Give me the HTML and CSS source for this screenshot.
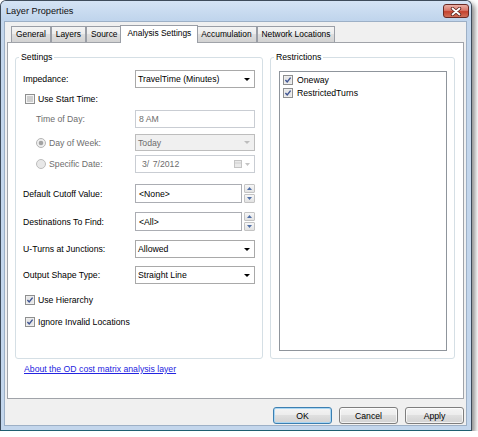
FILE: index.html
```html
<!DOCTYPE html>
<html>
<head>
<meta charset="utf-8">
<title>Layer Properties</title>
<link rel="stylesheet" href="styles.css">
</head>
<body>
<div class="window">
  <div class="titlebar">
    <span class="title">Layer Properties</span>
    <div class="close">
      <svg width="12" height="9" viewBox="0 0 12 9"><path d="M2.5 1.5 L9.5 7.5 M9.5 1.5 L2.5 7.5" stroke="#5b231d" stroke-width="3.4" stroke-linecap="round"/><path d="M2.5 1.5 L9.5 7.5 M9.5 1.5 L2.5 7.5" stroke="#fff" stroke-width="1.8" stroke-linecap="round"/></svg>
    </div>
  </div>
  <div class="client">
    <div class="tabs">
      <div class="tab">General</div>
      <div class="tab">Layers</div>
      <div class="tab">Source</div>
      <div class="tab active">Analysis Settings</div>
      <div class="tab">Accumulation</div>
      <div class="tab">Network Locations</div>
    </div>
    <div class="panel">
      <div class="groups">
        <fieldset class="group settings">
          <legend>Settings</legend>
          <div class="row">
            <span class="lbl">Impedance:</span>
            <div class="ctl combo"><span>TravelTime (Minutes)</span><svg class="arrow" width="6" height="3" viewBox="0 0 6 3"><path d="M0 0 H6 L3 3 Z" fill="#000"/></svg></div>
          </div>
          <div class="row h16 mt3">
            <label class="check">
              <svg width="10" height="10" viewBox="0 0 10 10"><rect x=".5" y=".5" width="9" height="9" fill="#f4f4f4" stroke="#8e8f8f"/><rect x="2" y="2" width="6" height="6" fill="#cfcfcf"/></svg>
              <span>Use Start Time:</span>
            </label>
          </div>
          <div class="row mt3">
            <span class="lbl indent dis">Time of Day:</span>
            <div class="ctl text disabled">8 AM</div>
          </div>
          <div class="row h17 mt6">
            <span class="lbl indent dis radio">
              <svg width="10" height="10" viewBox="0 0 10 10"><circle cx="5" cy="5" r="4.5" fill="#efefef" stroke="#b4b4b4"/><circle cx="5" cy="5" r="2.3" fill="#a3a3a3"/></svg>
              Day of Week:
            </span>
            <div class="ctl combo cdis"><span>Today</span><svg class="arrow" width="6" height="3" viewBox="0 0 6 3"><path d="M0 0 H6 L3 3 Z" fill="#bdbdbd"/></svg></div>
          </div>
          <div class="row mt4">
            <span class="lbl indent dis radio">
              <svg width="10" height="10" viewBox="0 0 10 10"><circle cx="5" cy="5" r="4.5" fill="#e8e8e8" stroke="#bcbcbc"/></svg>
              Specific Date:
            </span>
            <div class="ctl text disabled date"><span class="datetext">3/ 7/2012</span>
              <span class="dateicons">
                <svg width="8" height="8" viewBox="0 0 8 8"><rect x=".5" y=".5" width="7" height="7" fill="#e9e9e9" stroke="#c4c4c4"/><path d="M1 3 H7" stroke="#cfcfcf"/></svg>
                <svg width="5" height="3" viewBox="0 0 5 3"><path d="M0 0 H5 L2.5 3 Z" fill="#c4c4c4"/></svg>
              </span>
            </div>
          </div>
          <div class="row h19 mt11">
            <span class="lbl">Default Cutoff Value:</span>
            <div class="spinrow">
              <div class="text spinbox">&lt;None&gt;</div>
              <div class="spinner">
                <div class="sbtn"><svg width="5" height="3" viewBox="0 0 5 3"><path d="M0 3 H5 L2.5 0 Z" fill="#4f6ea6"/></svg></div>
                <div class="sbtn"><svg width="5" height="3" viewBox="0 0 5 3"><path d="M0 0 H5 L2.5 3 Z" fill="#4f6ea6"/></svg></div>
              </div>
            </div>
          </div>
          <div class="row h19 mt9">
            <span class="lbl">Destinations To Find:</span>
            <div class="spinrow">
              <div class="text spinbox">&lt;All&gt;</div>
              <div class="spinner">
                <div class="sbtn"><svg width="5" height="3" viewBox="0 0 5 3"><path d="M0 3 H5 L2.5 0 Z" fill="#4f6ea6"/></svg></div>
                <div class="sbtn"><svg width="5" height="3" viewBox="0 0 5 3"><path d="M0 0 H5 L2.5 3 Z" fill="#4f6ea6"/></svg></div>
              </div>
            </div>
          </div>
          <div class="row mt9">
            <span class="lbl">U-Turns at Junctions:</span>
            <div class="ctl combo"><span>Allowed</span><svg class="arrow" width="6" height="3" viewBox="0 0 6 3"><path d="M0 0 H6 L3 3 Z" fill="#000"/></svg></div>
          </div>
          <div class="row mt8">
            <span class="lbl">Output Shape Type:</span>
            <div class="ctl combo"><span>Straight Line</span><svg class="arrow" width="6" height="3" viewBox="0 0 6 3"><path d="M0 0 H6 L3 3 Z" fill="#000"/></svg></div>
          </div>
          <div class="row h16 mt8">
            <label class="check">
              <svg width="10" height="10" viewBox="0 0 10 10"><rect x=".5" y=".5" width="9" height="9" fill="#f4f4f4" stroke="#8e8f8f"/><rect x="1.5" y="1.5" width="7" height="7" fill="#e6e6e6"/><path d="M2.4 5 L4.2 7 L7.6 2.6" fill="none" stroke="#3f5593" stroke-width="1.4"/></svg>
              <span>Use Hierarchy</span>
            </label>
          </div>
          <div class="row h16 mt6">
            <label class="check">
              <svg width="10" height="10" viewBox="0 0 10 10"><rect x=".5" y=".5" width="9" height="9" fill="#f4f4f4" stroke="#8e8f8f"/><rect x="1.5" y="1.5" width="7" height="7" fill="#e6e6e6"/><path d="M2.4 5 L4.2 7 L7.6 2.6" fill="none" stroke="#3f5593" stroke-width="1.4"/></svg>
              <span>Ignore Invalid Locations</span>
            </label>
          </div>
        </fieldset>
        <fieldset class="group restrictions">
          <legend>Restrictions</legend>
          <div class="listbox">
            <div class="item">
              <svg width="10" height="10" viewBox="0 0 10 10"><rect x=".5" y=".5" width="9" height="9" fill="#f4f4f4" stroke="#8e8f8f"/><rect x="1.5" y="1.5" width="7" height="7" fill="#e6e6e6"/><path d="M2.4 5 L4.2 7 L7.6 2.6" fill="none" stroke="#3f5593" stroke-width="1.4"/></svg>
              <span>Oneway</span>
            </div>
            <div class="item">
              <svg width="10" height="10" viewBox="0 0 10 10"><rect x=".5" y=".5" width="9" height="9" fill="#f4f4f4" stroke="#8e8f8f"/><rect x="1.5" y="1.5" width="7" height="7" fill="#e6e6e6"/><path d="M2.4 5 L4.2 7 L7.6 2.6" fill="none" stroke="#3f5593" stroke-width="1.4"/></svg>
              <span>RestrictedTurns</span>
            </div>
          </div>
        </fieldset>
      </div>
      <a class="link" href="#">About the OD cost matrix analysis layer</a>
    </div>
    <div class="buttons">
      <button class="btn default">OK</button>
      <button class="btn">Cancel</button>
      <button class="btn">Apply</button>
    </div>
  </div>
</div>
</body>
</html>
```
FILE: styles.css
```css
* { box-sizing: border-box; }
html, body { margin: 0; padding: 0; background: #fff; }
body {
  font-family: "Liberation Sans", Arial, sans-serif;
  font-size: 8.7px;
  color: #000;
}
svg { display: block; flex: none; }

.window {
  width: 472px;
  height: 431px;
  border: 1px solid #3e4b5a;
  border-bottom-color: #1f5f70;
  border-radius: 6px 6px 0 0;
  background: #c3d6ec;
  box-shadow: 3px 3px 5px rgba(0, 0, 0, .45);
  display: flex;
  flex-direction: column;
}
.titlebar {
  height: 20px;
  flex: none;
  display: flex;
  align-items: flex-start;
  padding: 3px 2px 0 5px;
  background: linear-gradient(#d4e3f4, #bfd4ec);
  border-radius: 5px 5px 0 0;
}
.title { font-size: 9.2px; line-height: 14px; color: #111; }
.close {
  margin-left: auto;
  width: 26px;
  height: 14px;
  border: 1px solid #6a2a24;
  border-radius: 3px;
  background: linear-gradient(#eab0a6, #d8776a 45%, #c5432f 55%, #d0705a);
  display: flex;
  align-items: center;
  justify-content: center;
}

.client {
  flex: none;
  width: 463px;
  height: 405px;
  margin: 0 4px 4px 3px;
  border: 1px solid #9db0c6;
  background: #f0f0f0;
  display: flex;
  flex-direction: column;
}
.tabs {
  flex: none;
  height: 20px;
  display: flex;
  align-items: flex-end;
  padding-left: 6px;
}
.tab {
  height: 16px;
  border: 1px solid #9a9ea6;
  border-bottom: none;
  padding: 0 4px;
  line-height: 14px;
  font-size: 8.4px;
  white-space: nowrap;
  background: linear-gradient(#f4f4f4, #ececec 50%, #dedede 50%, #d2d2d2);
}
.tab.active {
  height: 18px;
  margin: 0 -2px -1px;
  padding: 0 6px;
  line-height: 15px;
  background: #fff;
  position: relative;
  z-index: 1;
}

.panel {
  flex: none;
  height: 357px;
  margin: 0 2px;
  border: 1px solid #a0a3a9;
  background: #fff;
  padding: 9px 7px 0 7px;
}
.groups { display: flex; gap: 7px; height: 307px; }
.group {
  margin: 0;
  min-width: 0;
  border: 1px solid #d5dfe5;
  border-radius: 3px;
  padding: 8px 7px 0 7px;
}
.group legend { padding: 0 2px; margin-left: -4px; line-height: 10px; }
.settings { width: 248px; }
.restrictions { width: 185px; padding: 9px 7px 0 8px; }
.restrictions legend { margin-left: -5px; }

.row { display: flex; align-items: center; height: 18px; }
.h16 { height: 16px; }
.h17 { height: 17px; }
.h19 { height: 19px; }
.mt3 { margin-top: 3px; }
.mt4 { margin-top: 4px; }
.mt6 { margin-top: 6px; }
.mt8 { margin-top: 8px; }
.mt9 { margin-top: 9px; }
.mt11 { margin-top: 11px; }

.lbl { width: 112px; flex: none; white-space: nowrap; }
.indent { padding-left: 13px; }
.dis { color: #6d6d6d; }
.radio { display: flex; align-items: center; gap: 3px; }
.check { display: flex; align-items: center; gap: 3px; padding-left: 2px; }

.ctl {
  width: 120px;
  height: 100%;
  display: flex;
  align-items: center;
  white-space: nowrap;
}
.combo {
  border: 1px solid #a9a9a9;
  background: #fff;
  padding: 0 4px 0 2px;
  justify-content: space-between;
}
.combo.cdis { background: #f0f0f0; border-color: #bdbdbd; color: #6d6d6d; }
.text {
  border: 1px solid #abadb3;
  background: #fff;
  padding: 0 3px;
  display: flex;
  align-items: center;
  white-space: nowrap;
}
.text.disabled { border-color: #c9cdd3; color: #6d6d6d; }
.date { padding-left: 6px; padding-right: 4px; justify-content: space-between; }
.datetext { white-space: pre; word-spacing: 1px; }
.dateicons { display: flex; align-items: center; gap: 3px; }

.spinrow { display: flex; gap: 2px; height: 100%; }
.spinbox { width: 107px; height: 100%; }
.spinner { width: 11px; display: flex; flex-direction: column; gap: 1px; }
.sbtn {
  flex: 1;
  border: 1px solid #c3c3c3;
  border-radius: 1px;
  background: linear-gradient(#f7f7f7, #e2e2e2);
  display: flex;
  align-items: center;
  justify-content: center;
}

.listbox {
  height: 280px;
  border: 1px solid #8f959c;
  background: #fff;
  padding: 1px 0 0 3px;
}
.item { display: flex; align-items: center; gap: 4px; height: 13px; }

.link {
  display: block;
  width: max-content;
  margin: 5px 0 0 9px;
  line-height: 11px;
  color: #2424e0;
  text-decoration: underline;
}

.buttons {
  flex: none;
  display: flex;
  justify-content: flex-end;
  gap: 7px;
  margin-top: 8px;
  padding-right: 2px;
}
.btn {
  width: 59px;
  height: 17px;
  padding: 0;
  font: inherit;
  color: #000;
  border: 1px solid #7e7e7e;
  border-radius: 3px;
  background: linear-gradient(#f4f4f4, #ececec 50%, #dfdfdf 50%, #d2d2d2);
  box-shadow: inset 0 0 0 1px rgba(255, 255, 255, .7);
}
.btn.default { border-color: #3c7fb1; box-shadow: inset 0 0 0 1px #a9d6f3; }
```
